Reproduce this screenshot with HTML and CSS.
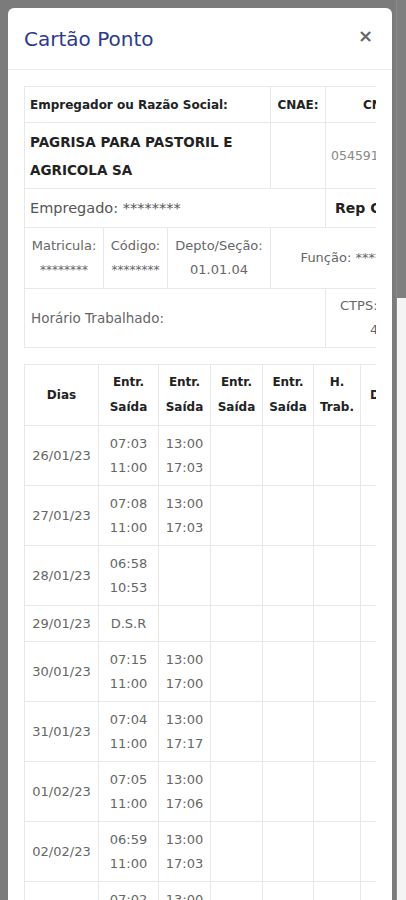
FILE: index.html
```html
<!DOCTYPE html>
<html>
<head>
<meta http-equiv="Content-Type" content="text/html; charset=utf-8"/>
<title>Cartão Ponto</title>
<link rel="stylesheet" href="styles.css">
</head>
<body>
<div class="backdrop">
  <div class="modal">
    <div class="modal-header">
      <h5 class="modal-title">Cartão Ponto</h5>
      <span class="close">&times;</span>
    </div>
    <div class="modal-body">
      <div class="table-wrap">
        <table class="info">
          <colgroup>
            <col class="c-mat"><col class="c-cod"><col class="c-dep"><col class="c-cnae"><col class="c-last">
          </colgroup>
          <tr class="r-head">
            <th colspan="3" class="left">Empregador ou Razão Social:</th>
            <th>CNAE:</th>
            <th>CNPJ:</th>
          </tr>
          <tr class="r-emp">
            <td colspan="3" class="left company">PAGRISA PARA PASTORIL E AGRICOLA SA</td>
            <td></td>
            <td class="left num">05459129000133</td>
          </tr>
          <tr class="r-empregado">
            <td colspan="4" class="left empregado">Empregado: ********</td>
            <td class="left rep">Rep CTPS:</td>
          </tr>
          <tr class="r-mat">
            <td class="small">Matricula:<br><span class="stars">********</span></td>
            <td class="small">Código:<br><span class="stars">********</span></td>
            <td class="small">Depto/Seção:<br>01.01.04</td>
            <td colspan="2" class="small">Função: ********</td>
          </tr>
          <tr class="r-hor">
            <td colspan="4" class="left small horario">Horário Trabalhado:</td>
            <td class="left small ctps">CTPS: 00123<span class="ctps-n">4321</span></td>
          </tr>
        </table>
      </div>

      <div class="table-wrap">
        <table class="ponto">
          <colgroup>
            <col class="p-dia"><col class="p-e1"><col class="p-e2"><col class="p-e3"><col class="p-e4"><col class="p-ht"><col class="p-deb">
          </colgroup>
          <tr class="p-head">
            <th>Dias</th>
            <th>Entr.<br>Saída</th>
            <th>Entr.<br>Saída</th>
            <th>Entr.<br>Saída</th>
            <th>Entr.<br>Saída</th>
            <th>H.<br>Trab.</th>
            <th>Débito</th>
          </tr>
          <tr><td>26/01/23</td><td>07:03<br>11:00</td><td>13:00<br>17:03</td><td></td><td></td><td></td><td></td></tr>
          <tr><td>27/01/23</td><td>07:08<br>11:00</td><td>13:00<br>17:03</td><td></td><td></td><td></td><td></td></tr>
          <tr><td>28/01/23</td><td>06:58<br>10:53</td><td></td><td></td><td></td><td></td><td></td></tr>
          <tr class="short"><td>29/01/23</td><td>D.S.R</td><td></td><td></td><td></td><td></td><td></td></tr>
          <tr><td>30/01/23</td><td>07:15<br>11:00</td><td>13:00<br>17:00</td><td></td><td></td><td></td><td></td></tr>
          <tr><td>31/01/23</td><td>07:04<br>11:00</td><td>13:00<br>17:17</td><td></td><td></td><td></td><td></td></tr>
          <tr><td>01/02/23</td><td>07:05<br>11:00</td><td>13:00<br>17:06</td><td></td><td></td><td></td><td></td></tr>
          <tr><td>02/02/23</td><td>06:59<br>11:00</td><td>13:00<br>17:03</td><td></td><td></td><td></td><td></td></tr>
          <tr><td>03/02/23</td><td>07:02<br>11:00</td><td>13:00<br>17:04</td><td></td><td></td><td></td><td></td></tr>
        </table>
      </div>
    </div>
  </div>
  <div class="scrollbar"><div class="thumb"></div></div>
</div>
</body>
</html>
```

FILE: styles.css
```css
html, body {
  margin: 0;
  padding: 0;
  height: 900px;
  overflow: hidden;
}

body {
  font-family: "DejaVu Sans", sans-serif;
  color: #666;
}

.backdrop {
  display: flex;
  height: 900px;
  background-color: #7b7b7b;
  overflow: hidden;
}

.modal {
  width: 384px;
  margin: 8px 4px 0 8px;
  background-color: #fff;
  border-radius: 6px 6px 0 0;
  flex: none;
}

.modal-header {
  display: flex;
  align-items: center;
  justify-content: space-between;
  height: 61px;
  padding: 0 16px;
  border-bottom: 1px solid #e9ecef;
}

.modal-title {
  margin: 0;
  font-size: 20px;
  font-weight: normal;
  color: #2d3a8c;
}

.close {
  font-size: 18px;
  font-weight: bold;
  color: #666;
  margin-right: 3px;
  margin-top: -6px;
}

.modal-body {
  padding: 16px;
}

.table-wrap {
  overflow: hidden;
  margin-bottom: 16px;
}

table {
  border-collapse: collapse;
  table-layout: fixed;
}

th, td {
  border: 1px solid #e8e8e8;
  text-align: center;
  vertical-align: middle;
  padding: 0 5px;
  white-space: nowrap;
  overflow: hidden;
}

th {
  color: #222;
}

.left {
  text-align: left;
}

/* employer / employee box */
.info {
  width: 413px;
}

.c-mat { width: 79px; }
.c-cod { width: 64px; }
.c-dep { width: 103px; }
.c-cnae { width: 55px; }
.c-last { width: 112px; }

.info th {
  font-size: 12px;
}

.r-head { height: 36px; }
.r-emp { height: 66px; }
.r-empregado { height: 39px; }
.r-mat { height: 61px; }
.r-hor { height: 59px; }

.company {
  white-space: normal;
  font-weight: bold;
  font-size: 13.5px;
  line-height: 28px;
  color: #222;
}

.num {
  font-size: 12.5px;
  color: #888;
}

.empregado {
  font-size: 14.5px;
  color: #555;
}

.rep {
  font-size: 14px;
  font-weight: bold;
  color: #222;
  padding-left: 9px;
}

.small {
  font-size: 13px;
  line-height: 24px;
  color: #666;
  padding: 0 2px;
}

.horario {
  padding-left: 6px;
  font-size: 13.5px;
}

.stars {
  font-size: 12px;
}

.ctps {
  padding-left: 14px;
}

.ctps-n {
  display: block;
  padding-left: 30px;
}

/* time card table */
.ponto {
  width: 400px;
}

.p-dia { width: 74px; }
.p-e1 { width: 60px; }
.p-e2 { width: 52px; }
.p-e3 { width: 52px; }
.p-e4 { width: 51px; }
.p-ht { width: 47px; }
.p-deb { width: 64px; }

.ponto th {
  font-size: 12px;
  line-height: 25px;
  height: 60px;
  padding: 0 2px;
}

.ponto td {
  font-size: 13px;
  line-height: 24px;
  height: 59px;
  padding: 0 2px;
  color: #666;
}

.ponto .short td {
  height: 35px;
}

.scrollbar {
  width: 10px;
  flex: none;
  background-color: #f4f4f4;
  border-left: 1px solid #8a8a8a;
  box-sizing: border-box;
}

.thumb {
  height: 298px;
  background-color: #7f7f7f;
}
```
